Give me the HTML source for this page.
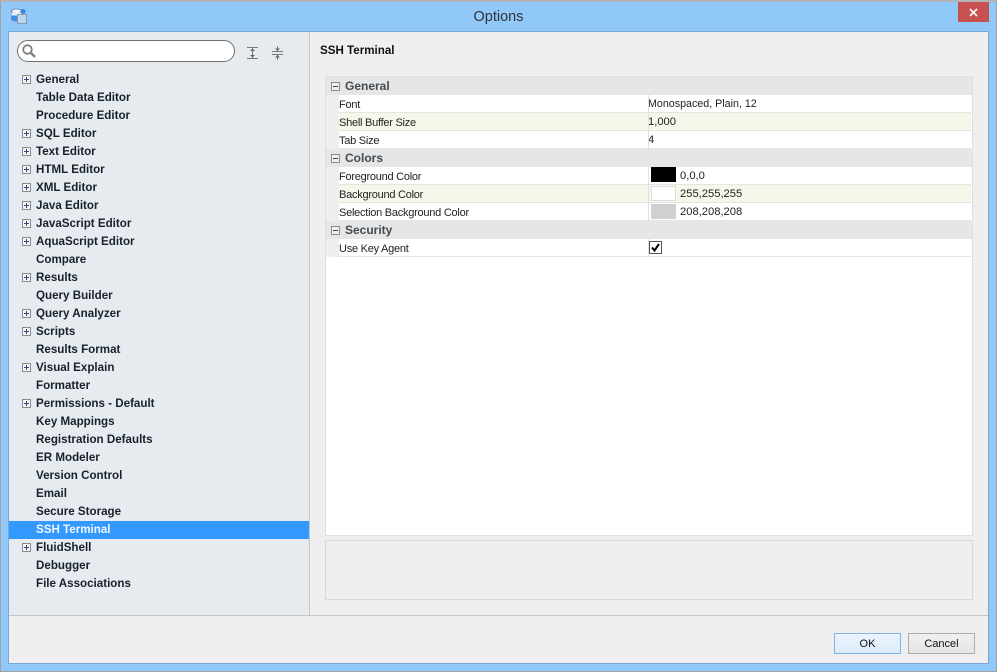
<!DOCTYPE html>
<html><head><meta charset="utf-8"><title>Options</title>
<style>
html,body{margin:0;padding:0;width:997px;height:672px;overflow:hidden;background:#90c8fa;font-family:"Liberation Sans",sans-serif;font-size:11px;color:#1a1a1a}
div,span{position:absolute;box-sizing:border-box;white-space:nowrap}
#win{left:0;top:0;width:997px;height:672px;border:1px solid #a0a0a0;border-top:2px solid #b4b4b4;background:#90c8fa}
#client{left:8px;top:31px;width:981px;height:633px;background:#efefef;border:1px solid #78a8d4}
.t{left:36px;font-weight:bold;font-size:11.6px;line-height:18px;height:18px;color:#18202c;margin-top:1px}
.pm{left:22px;width:9px;height:9px;border:1px solid #8b8b8b;background:#f4f4f4}
.pm:before{content:"";position:absolute;left:1px;top:3px;width:5px;height:1px;background:#2a4a80}
.pm:after{content:"";position:absolute;left:3px;top:1px;width:1px;height:5px;background:#2a4a80}
.h{left:326px;width:646px;height:18px;background:#e6e6e6}
.hl{left:345px;font-weight:bold;font-size:12px;line-height:18px;color:#444c54}
.mm{left:331px;width:9px;height:9px;border:1px solid #8b8b8b;background:#f0f0f0}
.mm:before{content:"";position:absolute;left:1px;top:3px;width:5px;height:1px;background:#444}
.r{left:339px;width:632px;height:18px;border-bottom:1px solid #e4e4e4;background:#fff}
.r.a{background:#f6f7ea}
.l{left:339px;line-height:18px;font-size:11px;letter-spacing:-.25px;color:#222;margin-top:1px}
.v{left:648px;line-height:17px;font-size:11.2px;color:#222;margin-top:1px}
.sw{left:651px;width:25px;height:15px}
.btn{top:633px;width:67px;height:21px;text-align:center;line-height:20px;font-size:11px;color:#111}
</style></head><body>
<div id="win"></div>
<div id="client"></div>
<svg style="position:absolute;left:10px;top:8px" width="18" height="17" viewBox="0 0 18 17"><path d="M1.5 3V11C1.5 12.5 4 13 6.5 13S11.5 12.5 11.5 11V3Z" fill="#3b8fe0" stroke="#5f8fc0"/><ellipse cx="6.5" cy="3" rx="5" ry="2" fill="#f4f8fc" stroke="#6a8fb8"/><rect x="1.5" y="4.5" width="10" height="3" fill="#eef5fb"/><circle cx="13" cy="3.5" r="2.5" fill="#3a86d8"/><rect x="7.5" y="6.5" width="9" height="9" fill="#b8d6f0" stroke="#8a9aa8"/></svg>
<div style="left:0;top:0;width:997px;height:31px;text-align:center;font-size:14.5px;line-height:35px;color:#333">Options</div>
<div style="left:958px;top:2px;width:31px;height:20px;background:#c75050"></div>
<svg style="position:absolute;left:969px;top:8px" width="10" height="9" viewBox="0 0 10 9"><path d="M1 1L8 8M8 1L1 8" stroke="#fff" stroke-width="1.6" fill="none"/></svg>

<div style="left:9px;top:32px;width:300px;height:583px;background:#e6ebf0"></div>
<div style="left:309px;top:32px;width:1px;height:583px;background:#c6c6c6"></div>
<div style="left:9px;top:615px;width:979px;height:1px;background:#c6c6c6"></div>

<div style="left:17px;top:40px;width:218px;height:22px;background:#fff;border:1px solid #707070;border-radius:11px"></div>
<svg style="position:absolute;left:21px;top:43px" width="16" height="16" viewBox="0 0 16 16"><circle cx="6.5" cy="6.5" r="4.3" fill="none" stroke="#808080" stroke-width="1.8"/><path d="M10 10L14 14" stroke="#808080" stroke-width="2.4"/></svg>
<svg style="position:absolute;left:246px;top:46px" width="13" height="14" viewBox="0 0 13 14"><path d="M1 1.5H12M1 12.5H12" stroke="#777" stroke-width="1"/><path d="M6.5 2V12" stroke="#777" stroke-width="1"/><path d="M4 5L6.5 2.5L9 5ZM4 9L6.5 11.5L9 9Z" fill="#666"/></svg>
<svg style="position:absolute;left:271px;top:46px" width="13" height="14" viewBox="0 0 13 14"><path d="M1 5.5H12M1 8.5H12" stroke="#777" stroke-width="1"/><path d="M6.5 0V5M6.5 9V14" stroke="#777" stroke-width="1"/><path d="M4 2.5L6.5 5L9 2.5ZM4 11.5L6.5 9L9 11.5Z" fill="#666"/></svg>

<div class="pm" style="top:75px"></div><div class="t" style="top:70px">General</div>
<div class="t" style="top:88px">Table Data Editor</div>
<div class="t" style="top:106px">Procedure Editor</div>
<div class="pm" style="top:129px"></div><div class="t" style="top:124px">SQL Editor</div>
<div class="pm" style="top:147px"></div><div class="t" style="top:142px">Text Editor</div>
<div class="pm" style="top:165px"></div><div class="t" style="top:160px">HTML Editor</div>
<div class="pm" style="top:183px"></div><div class="t" style="top:178px">XML Editor</div>
<div class="pm" style="top:201px"></div><div class="t" style="top:196px">Java Editor</div>
<div class="pm" style="top:219px"></div><div class="t" style="top:214px">JavaScript Editor</div>
<div class="pm" style="top:237px"></div><div class="t" style="top:232px">AquaScript Editor</div>
<div class="t" style="top:250px">Compare</div>
<div class="pm" style="top:273px"></div><div class="t" style="top:268px">Results</div>
<div class="t" style="top:286px">Query Builder</div>
<div class="pm" style="top:309px"></div><div class="t" style="top:304px">Query Analyzer</div>
<div class="pm" style="top:327px"></div><div class="t" style="top:322px">Scripts</div>
<div class="t" style="top:340px">Results Format</div>
<div class="pm" style="top:363px"></div><div class="t" style="top:358px">Visual Explain</div>
<div class="t" style="top:376px">Formatter</div>
<div class="pm" style="top:399px"></div><div class="t" style="top:394px">Permissions - Default</div>
<div class="t" style="top:412px">Key Mappings</div>
<div class="t" style="top:430px">Registration Defaults</div>
<div class="t" style="top:448px">ER Modeler</div>
<div class="t" style="top:466px">Version Control</div>
<div class="t" style="top:484px">Email</div>
<div class="t" style="top:502px">Secure Storage</div>
<div style="left:9px;top:521px;width:300px;height:18px;background:#3399ff"></div>
<div class="t" style="top:520px;color:#f0f6ff">SSH Terminal</div>
<div class="pm" style="top:543px"></div><div class="t" style="top:538px">FluidShell</div>
<div class="t" style="top:556px">Debugger</div>
<div class="t" style="top:574px">File Associations</div>

<div style="left:320px;top:42px;font-weight:bold;font-size:11.6px;line-height:18px;color:#111">SSH Terminal</div>

<div style="left:325px;top:76px;width:648px;height:460px;background:#fff;border:1px solid #e0e0e0"></div>
<div style="left:326px;top:95px;width:13px;height:162px;background:#efefef"></div>

<div class="h" style="top:77px"></div><div class="mm" style="top:82px"></div><div class="hl" style="top:77px">General</div>
<div class="r" style="top:95px"></div><div class="l" style="top:95px">Font</div><div class="v" style="top:95px;font-size:10.7px">Monospaced, Plain, 12</div>
<div class="r a" style="top:113px"></div><div class="l" style="top:113px">Shell Buffer Size</div><div class="v" style="top:113px">1,000</div>
<div class="r" style="top:131px"></div><div class="l" style="top:131px">Tab Size</div><div class="v" style="top:131px">4</div>
<div class="h" style="top:149px"></div><div class="mm" style="top:154px"></div><div class="hl" style="top:149px">Colors</div>
<div class="r" style="top:167px"></div><div class="l" style="top:167px">Foreground Color</div><div class="sw" style="top:167px;background:#000"></div><div class="v" style="top:167px;left:680px">0,0,0</div>
<div class="r a" style="top:185px"></div><div class="l" style="top:185px">Background Color</div><div class="sw" style="top:186px;background:#fff;border:1px solid #ddd"></div><div class="v" style="top:185px;left:680px">255,255,255</div>
<div class="r" style="top:203px"></div><div class="l" style="top:203px">Selection Background Color</div><div class="sw" style="top:204px;background:#d0d0d0"></div><div class="v" style="top:203px;left:680px">208,208,208</div>
<div class="h" style="top:221px"></div><div class="mm" style="top:226px"></div><div class="hl" style="top:221px">Security</div>
<div class="r" style="top:239px"></div><div class="l" style="top:239px">Use Key Agent</div>
<div style="left:649px;top:241px;width:13px;height:13px;background:#fff;border:1px solid #555"></div>
<svg style="position:absolute;left:650px;top:242px" width="11" height="11" viewBox="0 0 11 11"><path d="M2 5.5L4.5 8.5L9 2" stroke="#000" stroke-width="2" fill="none"/></svg>
<div style="left:648px;top:95px;width:1px;height:54px;background:#e0e0e0"></div>
<div style="left:648px;top:167px;width:1px;height:54px;background:#e0e0e0"></div>
<div style="left:648px;top:239px;width:1px;height:18px;background:#e0e0e0"></div>

<div style="left:325px;top:540px;width:648px;height:60px;border:1px solid #d8d8d8;background:#efefef"></div>

<div class="btn" style="left:834px;background:linear-gradient(#ecf4fc,#dcecfc);border:1px solid #7eb4ea">OK</div>
<div class="btn" style="left:908px;background:linear-gradient(#f0f0f0,#e5e5e5);border:1px solid #acacac">Cancel</div>
</body></html>
